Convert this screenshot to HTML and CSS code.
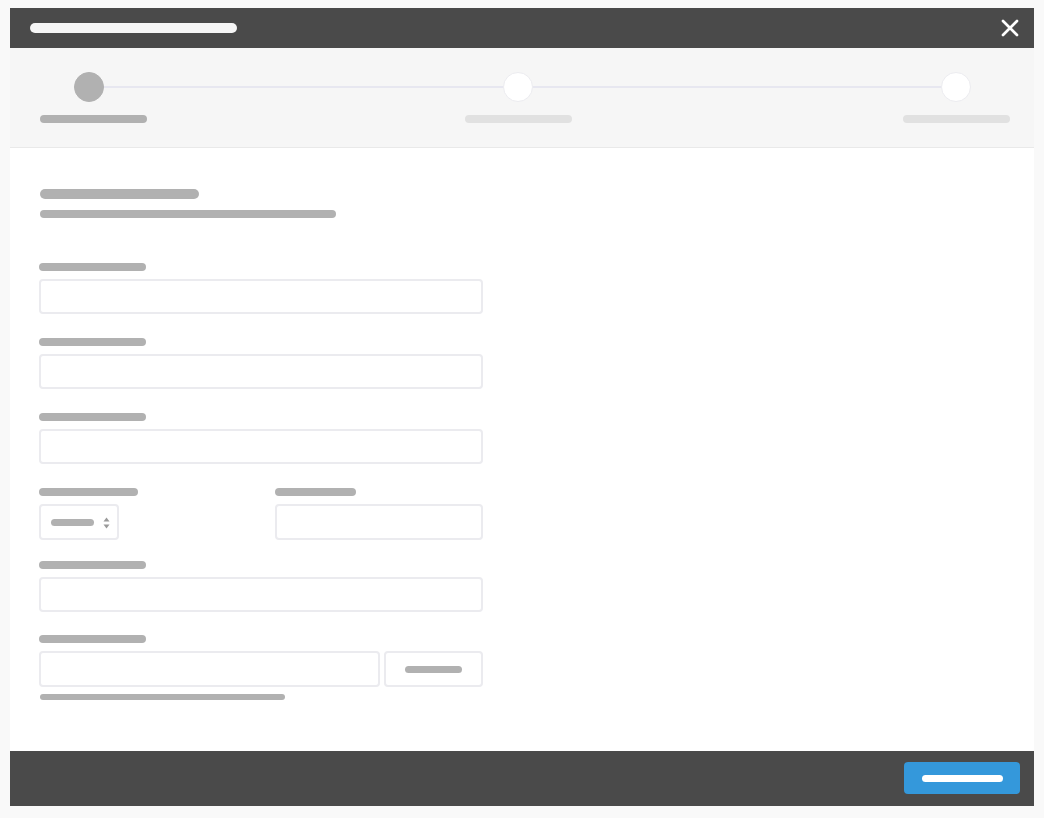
FILE: index.html
```html
<!DOCTYPE html>
<html lang="en">
<head>
<meta charset="utf-8">
<title>Wizard</title>
<link rel="stylesheet" href="styles.css">
</head>
<body>
<div class="modal">
  <header class="modal-header">
    <span class="bar title-bar"></span>
    <svg class="close" width="18" height="18" viewBox="0 0 18 18"><path d="M2 2L16 16M16 2L2 16" stroke="#fff" stroke-width="2.7" stroke-linecap="round"/></svg>
  </header>
  <section class="stepper">
    <div class="step-track">
      <span class="dot dot-active"></span>
      <span class="line line-1"></span>
      <span class="dot"></span>
      <span class="line line-2"></span>
      <span class="dot"></span>
    </div>
    <div class="step-labels">
      <span class="bar step-label active"></span>
      <span class="bar step-label step-label-2"></span>
      <span class="bar step-label step-label-3"></span>
    </div>
  </section>
  <main class="content">
    <div class="intro">
      <span class="bar heading"></span>
      <span class="bar subheading"></span>
    </div>
    <div class="form">
      <div class="field">
        <span class="bar label"></span>
        <div class="input"></div>
      </div>
      <div class="field">
        <span class="bar label"></span>
        <div class="input"></div>
      </div>
      <div class="field">
        <span class="bar label"></span>
        <div class="input"></div>
      </div>
      <div class="field-row">
        <div class="field field-left">
          <span class="bar label label-short"></span>
          <div class="select">
            <span class="bar select-bar"></span>
            <svg class="arrows" width="7" height="12" viewBox="0 0 7 12"><path d="M3.5 0.5L6.5 4.5H0.5Z M3.5 11.5L6.5 7.5H0.5Z" fill="#9a9a9a"/></svg>
          </div>
        </div>
        <div class="field field-right">
          <span class="bar label label-shorter"></span>
          <div class="input input-small"></div>
        </div>
      </div>
      <div class="field field-tight">
        <span class="bar label"></span>
        <div class="input"></div>
      </div>
      <div class="field field-tight">
        <span class="bar label"></span>
        <div class="input-group">
          <div class="input input-grow"></div>
          <div class="btn-outline"><span class="bar btn-bar"></span></div>
        </div>
        <span class="bar help"></span>
      </div>
    </div>
  </main>
  <footer class="modal-footer">
    <div class="btn-primary"><span class="bar primary-bar"></span></div>
  </footer>
</div>
</body>
</html>
```

FILE: styles.css
```css
* { box-sizing: border-box; }
html, body { margin: 0; }
body {
  background: #f9f9f9;
  padding: 8px 10px 12px 10px;
  font-family: "Liberation Sans", Arial, sans-serif;
}
.modal {
  width: 1024px;
  height: 798px;
  display: flex;
  flex-direction: column;
  background: #fff;
}
.bar {
  display: block;
  border-radius: 5px;
  background: #b1b1b1;
}
.modal-header {
  height: 40px;
  background: #4a4a4a;
  display: flex;
  align-items: center;
  justify-content: space-between;
  padding: 0 15px 0 20px;
}
.title-bar {
  width: 207px;
  height: 10px;
  background: #f6f6f6;
}
.close { display: block; }

.stepper {
  background: #f6f6f6;
  border-bottom: 1px solid #e9e9e9;
  padding: 24px 24px 24px 30px;
}
.step-track {
  display: flex;
  align-items: center;
  padding-left: 34px;
  padding-right: 39px;
}
.dot {
  width: 30px;
  height: 30px;
  border-radius: 50%;
  background: #fff;
  border: 1px solid #ececf0;
  flex: none;
}
.dot-active {
  background: #b1b1b1;
  border-color: #b1b1b1;
}
.line {
  height: 2px;
  background: #e7e7f0;
}
.line-1 { width: 399px; flex: none; }
.line-2 { flex: 1; }
.step-labels {
  display: flex;
  margin-top: 13px;
}
.step-label {
  width: 107px;
  height: 8px;
  background: #e1e1e1;
  flex: none;
}
.step-label.active { background: #b1b1b1; }
.step-label-2 { margin-left: 318px; }
.step-label-3 { margin-left: auto; }

.content {
  flex: 1;
  padding: 41px 30px 0 29px;
}
.intro { padding-left: 1px; }
.heading { width: 159px; height: 10px; }
.subheading { width: 296px; height: 8px; margin-top: 11px; }
.form {
  margin-top: 45px;
  width: 444px;
  display: flex;
  flex-direction: column;
  gap: 24px;
}
.field {
  display: flex;
  flex-direction: column;
  gap: 8px;
}
.field-tight { margin-top: -1px; }
.label { width: 107px; height: 8px; }
.label-short { width: 99px; }
.label-shorter { width: 81px; }
.input {
  height: 35px;
  border: 2px solid #ebebef;
  border-radius: 4px;
  background: #fff;
}
.field-row {
  display: flex;
  justify-content: space-between;
  margin-bottom: -2px;
}
.field-right { width: 208px; }
.input-small { height: 36px; }
.select {
  width: 80px;
  height: 36px;
  border: 2px solid #ebebef;
  border-radius: 4px;
  display: flex;
  align-items: center;
  padding-left: 10px;
  gap: 9px;
}
.select-bar { width: 43px; height: 7px; }
.arrows { display: block; margin-top: 1px; }
.input-group {
  display: flex;
  gap: 4px;
  height: 36px;
}
.input-grow { flex: 1; height: 36px; }
.btn-outline {
  width: 99px;
  border: 2px solid #ebebef;
  border-radius: 4px;
  display: flex;
  align-items: center;
  justify-content: center;
}
.btn-bar { width: 57px; height: 7px; }
.help { width: 245px; height: 6px; margin-top: -1px; margin-left: 1px; }

.modal-footer {
  height: 55px;
  background: #4a4a4a;
  display: flex;
  align-items: center;
  justify-content: flex-end;
  padding: 0 14px 1px 0;
}
.btn-primary {
  width: 116px;
  height: 32px;
  background: #3498db;
  border-radius: 4px;
  display: flex;
  align-items: center;
  justify-content: center;
}
.primary-bar { width: 81px; height: 7px; background: #fff; }
```
